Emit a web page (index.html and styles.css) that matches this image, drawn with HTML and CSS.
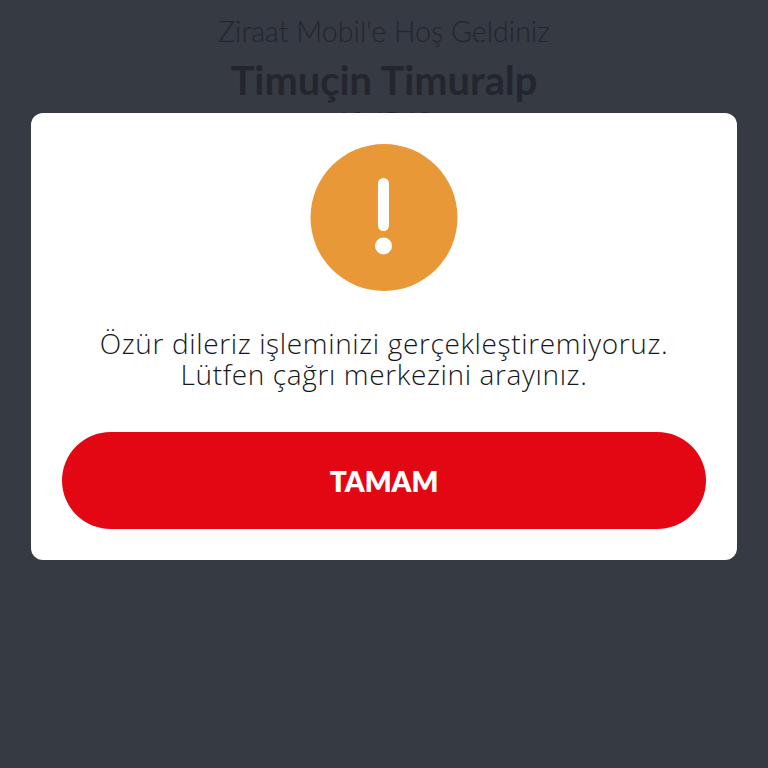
FILE: index.html
```html
<!DOCTYPE html>
<html lang="tr">
<head>
<meta charset="utf-8">
<title>Ziraat Mobil</title>
<link rel="stylesheet" href="styles.css">
</head>
<body>
<header class="welcome">
  <p class="greeting">Ziraat Mobil'e Hoş Geldiniz</p>
  <h1 class="name">Timuçin Timuralp</h1>
  <p class="time">12:45:18</p>
</header>
<div class="overlay">
  <section class="dialog">
    <svg class="icon" viewBox="0 0 148 148" aria-hidden="true">
      <circle cx="74" cy="73.5" r="73.5" fill="#e99838"/>
      <rect x="68" y="34" width="11" height="53" rx="5.5" fill="#fff"/>
      <circle cx="73.5" cy="102" r="8.5" fill="#fff"/>
    </svg>
    <p class="message">Özür dileriz işleminizi gerçekleştiremiyoruz.<br>Lütfen çağrı merkezini arayınız.</p>
    <button class="ok" type="button">TAMAM</button>
  </section>
</div>
</body>
</html>
```

FILE: styles.css
```css
* { box-sizing: border-box; }
html, body { margin: 0; height: 100%; }
body {
  background: #363a43;
  font-family: "Lato", "Liberation Sans", sans-serif;
  overflow: hidden;
}
.welcome {
  display: flex;
  flex-direction: column;
  align-items: center;
  padding-top: 15px;
  color: #23262e;
}
.greeting { margin: 0; font-size: 28.6px; line-height: 32px; font-weight: 300; }
.name { margin: 11px 0 0; font-size: 39.8px; line-height: 44px; font-weight: 700; }
.time { margin: 5px 0 0; font-size: 24px; line-height: 26px; }
.overlay {
  position: absolute;
  left: 31px;
  top: 113px;
  width: 706px;
}
.dialog {
  height: 447px;
  background: #fff;
  border-radius: 12px;
  padding: 31px 31px 0;
  display: flex;
  flex-direction: column;
  align-items: center;
}
.icon { width: 148px; height: 148px; display: block; flex: none; }
.message {
  margin: 36px 0 0;
  font-family: "Open Sans", "Liberation Sans", sans-serif;
  font-size: 28px;
  letter-spacing: 0.64px;
  line-height: 31px;
  font-weight: 300;
  color: #16181c;
  text-align: center;
  white-space: nowrap;
}
.ok {
  margin-top: 42px;
  width: 100%;
  height: 97px;
  flex: none;
  border: 0;
  border-radius: 49px;
  background: #e30613;
  color: #fff;
  font: 800 28px "Lato", "Liberation Sans", sans-serif;
}
```
